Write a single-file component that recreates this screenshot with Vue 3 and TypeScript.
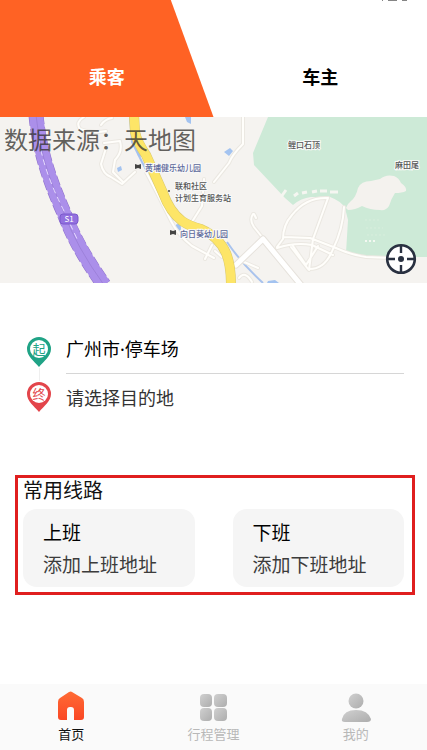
<script setup lang="ts">
import { ref } from 'vue'

type Role = 'passenger' | 'driver'

interface Shortcut {
  id: string
  title: string
  hint: string
}

interface NavItem {
  id: string
  label: string
}

const role = ref<Role>('passenger')
const activeNav = ref('home')
const origin = ref('广州市·停车场')

const shortcuts: Shortcut[] = [
  { id: 'to-work', title: '上班', hint: '添加上班地址' },
  { id: 'off-work', title: '下班', hint: '添加下班地址' },
]

const navItems: NavItem[] = [
  { id: 'home', label: '首页' },
  { id: 'trips', label: '行程管理' },
  { id: 'mine', label: '我的' },
]
</script>

<template>
  <div class="page">
    <header class="roles">
      <button
        type="button"
        class="role role-left"
        :class="{ active: role === 'passenger' }"
        @click="role = 'passenger'"
      >乘客</button>
      <button
        type="button"
        class="role"
        :class="{ active: role === 'driver' }"
        @click="role = 'driver'"
      >车主</button>
      <svg class="status" width="28" height="2" viewBox="0 0 28 2" aria-hidden="true">
        <path d="M1 .5h1M7 .5h9M21 .5h5" stroke="#858585" />
      </svg>
    </header>

    <section class="map">
      <svg class="map-canvas" viewBox="0 0 427 166" preserveAspectRatio="xMidYMid slice">
        <rect width="427" height="166" fill="#f5f3f0" />

        <!-- parkland -->
        <path d="M268 0 253 36 254 48 285 81 293 88Q301 81 311 80L330 80Q341 84 345 91L348 103 346 136Q352 140 363 140H427V0Z" fill="#cdead7" />
        <path d="M346 91Q347 87 351 84 356 80 358 71 361 64 371 64L380 62Q386 57 394 59 399 61 401 66 407 70 406 74 402 76 395 76 391 82 389 89 386 94 380 93 370 93 362 89 355 93 348 93Z" fill="#f4f2ee" />
        <path d="m281 80 5-7M294 79l4-3M302 76l5-1M312 75l5-1M320 74h7M330 75h8" stroke="#f5f6f1" stroke-width="3" fill="none" />
        <path d="M365 124h10M364 140h21" stroke="#f4f8f2" stroke-width="2" stroke-dasharray="2 2" fill="none" />
        <path d="M365 103h16M366 111h17M367 118h19" stroke="#d8eedd" stroke-dasharray="2 2" fill="none" />

        <!-- water -->
        <path d="M130 0 132 25 142 45 160 79 174 103M227 125Q242 147 263 166" stroke="#a9c3ed" stroke-width="2" fill="none" />
        <g fill="#a3c3f0">
          <path d="M185 0h6v7l-4-2zM224 35l6-4 3 3-4 5zM117 51l4-2 1 4-4 2zM132 18l5 8 5 14-4-1zM268 164l7-1 4 3h-12z" />
          <ellipse cx="178" cy="111" rx="3" ry="4" />
        </g>

        <!-- local roads -->
        <g fill="none" stroke-linecap="round" stroke-linejoin="round">
          <g stroke="#ebe8e2" stroke-width="4">
            <path d="M84 0Q75 5 80 12 93 17 106 14" />
            <path d="M104 26 120 24Q123 35 115 43L113 55 123 65M106 31 101 47Q103 57 111 60L122 67 135 55M101 8Q105 2 112 1" />
            <path d="M146 55 158 78 171 104Q178 118 192 129L214 141" />
            <path d="M243 0 243 27Q232 38 229 46L214 65" />
            <path d="M204 62 202 89 190 108M205 142l7-14" />
            <path d="M328 81 313 122 309 153M344 90Q343 112 333 132 325 153 308 152L291 130M328 81Q306 80 292 98 283 108 283 122L277 130M284 120 310 121 336 131Q351 138 366 140L390 141M277 131Q295 125 312 128L333 138M293 129 306 148 318 129" />
            <path d="M253 97Q249 103 254 110L262 120M254 97 256 101M215 134 222 140M239 161Q245 153 252 165M242 144 258 151" />
          </g>
          <g stroke="#fffefb" stroke-width="2">
            <path d="M84 0Q75 5 80 12 93 17 106 14" />
            <path d="M104 26 120 24Q123 35 115 43L113 55 123 65M106 31 101 47Q103 57 111 60L122 67 135 55M101 8Q105 2 112 1" />
            <path d="M146 55 158 78 171 104Q178 118 192 129L214 141" />
            <path d="M243 0 243 27Q232 38 229 46L214 65" />
            <path d="M204 62 202 89 190 108M205 142l7-14" />
            <path d="M328 81 313 122 309 153M344 90Q343 112 333 132 325 153 308 152L291 130M328 81Q306 80 292 98 283 108 283 122L277 130M284 120 310 121 336 131Q351 138 366 140L390 141M277 131Q295 125 312 128L333 138M293 129 306 148 318 129" />
            <path d="M253 97Q249 103 254 110L262 120M254 97 256 101M215 134 222 140M239 161Q245 153 252 165M242 144 258 151" />
          </g>
          <path d="M236 148 263 122 301 168" stroke="#e6e2dc" stroke-width="7" />
          <path d="M236 148 263 122 301 168" stroke="#fff" stroke-width="5" />
        </g>

        <!-- arterial road -->
        <g fill="none">
          <path d="M134-2 135 15Q137 25 146 38L163 76Q170 95 182 104 189 109 201 112 219 120 226 136 231 148 231 168" stroke="#d8c86e" stroke-width="10" />
          <path d="M134-2 135 15Q137 25 146 38L163 76Q170 95 182 104 189 109 201 112 219 120 226 136 231 148 231 168" stroke="#fde567" stroke-width="9" />
        </g>

        <!-- expressway -->
        <g fill="none">
          <path d="M36-2Q38 20 44 42 51 67 64 96 76 129 104 168" stroke="#8e70cb" stroke-width="15" stroke-dasharray="10 3" />
          <path d="M36-2Q38 20 44 42 51 67 64 96 76 129 104 168" stroke="#ab8fea" stroke-width="14" />
          <path d="M36-2Q38 20 44 42 51 67 64 96 76 129 104 168" stroke="#9d81da" stroke-width="1" />
          <path d="M39 23Q44 55 64 94L78 124" stroke="#e7dcff" stroke-width="1" stroke-dasharray="6 4" />
        </g>
        <rect x="60" y="97" width="18" height="10" rx="3" fill="#9270df" stroke="#7b58cc" />
        <text x="69" y="105" class="road-label">S1</text>

        <g fill="#444">
          <path d="M135 47l3 1 3-1v5l-3-1-3 1zM170 113l3 1 3-1v5l-3-1-3 1z" />
          <circle cx="169" cy="74" r="1" />
        </g>
        <g class="place school">
          <text x="145" y="54">黄埔健乐幼儿园</text>
          <text x="180" y="120">向日葵幼儿园</text>
        </g>
        <g class="place">
          <text x="175" y="72">联和社区</text>
          <text x="175" y="84">计划生育服务站</text>
          <text x="288" y="31">鲤口石顶</text>
          <text x="395" y="51">麻田尾</text>
        </g>
      </svg>
      <p class="source">数据来源：天地图</p>
      <button type="button" class="locate" aria-label="定位">
        <svg width="32" height="32" viewBox="0 0 32 32" aria-hidden="true">
          <circle cx="16" cy="16" r="13.8" fill="#fff" stroke="#293141" stroke-width="2.6" />
          <path d="M16 2v8M16 22v8M2 16h8M22 16h8" stroke="#293141" stroke-width="2.4" />
          <circle cx="16" cy="16" r="3" fill="#293141" />
        </svg>
      </button>
    </section>

    <main class="content">
      <section class="trip">
        <div class="pins" aria-hidden="true">
          <svg class="pin" width="26" height="32" viewBox="0 0 26 32">
            <path d="M13 1A12 12 0 0 0 1 13C1 20 8 25 13 31 18 25 25 20 25 13A12 12 0 0 0 13 1Z" fill="#20a386" />
            <circle cx="13" cy="13" r="9" fill="#fff" />
            <text x="13" y="18" fill="#20a386">起</text>
          </svg>
          <span class="link-line"></span>
          <svg class="pin" width="26" height="32" viewBox="0 0 26 32">
            <path d="M13 1A12 12 0 0 0 1 13C1 20 8 25 13 31 18 25 25 20 25 13A12 12 0 0 0 13 1Z" fill="#e3454b" />
            <circle cx="13" cy="13" r="9" fill="#fff" />
            <text x="13" y="18" fill="#e3454b">终</text>
          </svg>
        </div>
        <div class="stops">
          <button type="button" class="stop">{{ origin }}</button>
          <button type="button" class="stop empty">请选择目的地</button>
        </div>
      </section>

      <section class="routes">
        <h2>常用线路</h2>
        <div class="cards">
          <button v-for="item in shortcuts" :key="item.id" type="button" class="card">
            <span class="card-title">{{ item.title }}</span>
            <span class="card-hint">{{ item.hint }}</span>
          </button>
        </div>
      </section>
    </main>

    <nav class="tabbar">
      <a
        v-for="item in navItems"
        :key="item.id"
        :href="`#${item.id}`"
        class="tab"
        :class="{ current: activeNav === item.id }"
        @click.prevent="activeNav = item.id"
      >
        <svg width="32" height="32" viewBox="0 0 32 32" aria-hidden="true">
          <defs>
            <linearGradient id="homeFill" x1="0" y1="0" x2="0" y2="1">
              <stop offset="0" stop-color="#ff6b35" />
              <stop offset="1" stop-color="#fa4724" />
            </linearGradient>
            <linearGradient id="greyFill" x1="0" y1="0" x2="1" y2="1">
              <stop offset="0" stop-color="#d0d0d0" />
              <stop offset="1" stop-color="#adadad" />
            </linearGradient>
          </defs>
          <path
            v-if="item.id === 'home'"
            d="M14 2Q16 1 17 2L27 8Q29 9 29 12V27Q29 30 26 30H19V20Q19 17 16 17H15Q12 17 12 20V30H6Q3 30 3 27V12Q3 9 5 8Z"
            fill="url(#homeFill)"
          />
          <g v-else-if="item.id === 'trips'" fill="url(#greyFill)">
            <rect x="3" y="4" width="12" height="13" rx="4" />
            <rect x="17" y="4" width="13" height="13" rx="4" />
            <rect x="3" y="18" width="12" height="13" rx="4" />
            <rect x="17" y="18" width="13" height="13" rx="4" />
          </g>
          <g v-else fill="url(#greyFill)">
            <circle cx="16" cy="11" r="7.5" />
            <path d="M2 29Q4 20 16 20 28 20 31 29 31 32 27 32H5Q1 32 2 29Z" />
          </g>
        </svg>
        <span>{{ item.label }}</span>
      </a>
    </nav>
  </div>
</template>

<style>
body {
  background: #fff;
}
</style>

<style scoped>
.page {
  display: flex;
  flex-direction: column;
  min-height: 100vh;
  font-family: "Noto Sans CJK SC", sans-serif;
  color: #111;
  background: #fff;
}

button {
  margin: 0;
  padding: 0;
  border: 0;
  background: none;
  font: inherit;
  color: inherit;
  text-align: left;
  cursor: pointer;
}

.roles {
  position: relative;
  display: grid;
  grid-template-columns: 1fr 1fr;
}

.role {
  padding: 62px 0 27px;
  font-size: 18px;
  font-weight: 700;
  line-height: 28px;
  text-align: center;
  color: #000;
}

.role.active {
  color: #fff;
  background: #ff6224;
  clip-path: polygon(0 0, 100% 0, 100% 100%, 20% 100%);
}

.role-left.active {
  clip-path: polygon(0 0, 80% 0, 100% 100%, 0 100%);
}

.status {
  position: absolute;
  top: 0;
  right: 18px;
}

.map {
  position: relative;
  height: 166px;
}

.map-canvas {
  display: block;
  width: 100%;
  height: 100%;
}

.place text {
  font-size: 8px;
  font-weight: 500;
  fill: #555;
  stroke: #fafafa;
  stroke-width: 2px;
  paint-order: stroke;
}

.place.school text {
  fill: #5c6899;
}

.road-label {
  font-size: 8px;
  fill: #fff;
  text-anchor: middle;
}

.source {
  position: absolute;
  top: 4px;
  left: 4px;
  margin: 0;
  font-size: 24px;
  line-height: 36px;
  color: rgba(50, 48, 45, 0.75);
}

.locate {
  position: absolute;
  right: 10px;
  bottom: 8px;
  display: flex;
}

.content {
  flex: 1;
  display: flex;
  flex-direction: column;
  gap: 52px;
  padding: 42px 12px 24px 15px;
}

.trip {
  display: flex;
  align-items: center;
  gap: 14px;
  padding: 0 11px;
}

.pins {
  display: flex;
  flex-direction: column;
  align-items: center;
}

.pin text {
  font-size: 13px;
  text-anchor: middle;
}

.link-line {
  width: 1px;
  height: 13px;
  background: #efefef;
}

.stops {
  flex: 1;
  display: flex;
  flex-direction: column;
}

.stop {
  padding: 10px 0;
  font-family: "Noto Sans", "Noto Sans CJK SC", sans-serif;
  font-size: 18px;
  line-height: 28px;
  color: #000;
  border-bottom: 1px solid #d6d6d6;
}

.stop.empty {
  color: #333;
  border-bottom-color: transparent;
}

.routes {
  padding: 0 8px 5px 5px;
  border: 3px solid #e01f1f;
}

.routes h2 {
  margin: 0;
  font-size: 20px;
  font-weight: 400;
  line-height: 24px;
  padding-bottom: 7px;
}

.cards {
  display: grid;
  grid-template-columns: 1fr 1fr;
  gap: 38px;
}

.card {
  display: flex;
  flex-direction: column;
  padding: 7px 20px;
  font-size: 19px;
  line-height: 32px;
  border-radius: 14px;
  background: #f5f5f5;
}

.card-title {
  color: #000;
}

.card-hint {
  color: #3c3c3c;
}

.tabbar {
  display: grid;
  grid-template-columns: repeat(3, 1fr);
  padding: 6px 0;
  background: #fafafa;
}

.tab {
  display: flex;
  flex-direction: column;
  align-items: center;
  gap: 2px;
  font-size: 13px;
  line-height: 20px;
  color: #b8b8b8;
  text-decoration: none;
}

.tab.current {
  color: #111;
}
</style>
